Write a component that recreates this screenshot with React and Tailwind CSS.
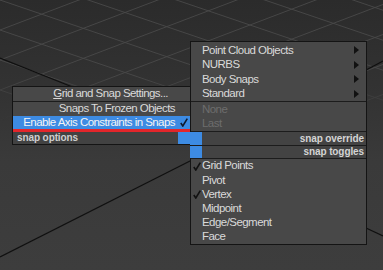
import React from 'react';

const gridA = [-150, -120, -90, -60, -30, 0, 30, 60, 90, 120];
const gridB = [0, 30, 60, 90, 120, 150, 180, 210, 240, 270];

function Check({ color = '#111' }) {
  return (
    <svg width="8" height="9" viewBox="0 0 8 9">
      <path d="M0.8 5 L2.8 8 L7.3 0.6" fill="none" stroke={color} strokeWidth="1.6" />
    </svg>
  );
}

function Arrow() {
  return (
    <svg width="5" height="8" viewBox="0 0 5 8">
      <path d="M0 0 L5 4 L0 8 Z" fill="#111" />
    </svg>
  );
}

function Viewport() {
  return (
    <svg className="absolute inset-0" width="383" height="270" viewBox="0 0 383 270">
      <defs>
        <linearGradient id="bg" x1="0" y1="0" x2="0" y2="1">
          <stop offset="0" stopColor="#2b2b2b" />
          <stop offset="0.35" stopColor="#333333" />
          <stop offset="0.6" stopColor="#3a3a3a" />
          <stop offset="1" stopColor="#3d3d3d" />
        </linearGradient>
        <linearGradient id="fade" x1="0" y1="0" x2="0" y2="1">
          <stop offset="0" stopColor="#fff" />
          <stop offset="0.28" stopColor="#fff" />
          <stop offset="0.45" stopColor="#000" />
        </linearGradient>
        <mask id="gridMask">
          <rect width="383" height="270" fill="url(#fade)" />
        </mask>
      </defs>
      <rect width="383" height="270" fill="url(#bg)" />
      <g mask="url(#gridMask)" stroke="#4a4a4a" strokeWidth="0.9">
        {gridA.map(c => (
          <line key={'a' + c} x1="0" y1={c} x2="383" y2={c + 383 * 0.34} />
        ))}
        {gridB.map(c => (
          <line key={'b' + c} x1="0" y1={c} x2="383" y2={c - 383 * 0.38} />
        ))}
      </g>
      <g stroke="#101010" strokeWidth="1.2">
        <line x1="0" y1="58" x2="80" y2="90" />
        <line x1="0" y1="257" x2="192" y2="160" />
        <line x1="366" y1="70" x2="383" y2="61" />
        <line x1="366" y1="228" x2="383" y2="236" />
      </g>
    </svg>
  );
}

function LeftMenu() {
  return (
    <div className="absolute left-[12px] top-[86px] w-[179px] border border-[#141414] bg-[#484848] text-[#dadada]">
      <div className="flex h-[14px] items-center justify-end pr-[22px]">
        <span><span className="underline underline-offset-1">G</span>rid and Snap Settings...</span>
      </div>
      <div className="h-px bg-[#1c1c1c]" />
      <div className="flex h-[14px] items-center justify-end pr-[15px]">Snaps To Frozen Objects</div>
      <div className="flex h-[13px] items-center justify-end bg-[#3d8be3] text-[#f4f4f4]">
        <span>Enable Axis Constraints in Snaps</span>
        <span className="flex w-[15px] justify-center pl-[2px]"><Check color="#0e1a30" /></span>
      </div>
      <div className="h-[3px] bg-[#e3262b]" />
      <div className="flex h-[12px] items-center justify-between bg-[#424242]">
        <span className="pl-[4px] text-[10px] font-bold tracking-[-0.1px] text-[#cfcfcf]">snap options</span>
        <span className="h-full w-[12px] bg-[#3d8be3]" />
      </div>
    </div>
  );
}

function Item({ label, arrow, disabled, checked, h = 'h-[14.5px]' }) {
  return (
    <div className={`flex ${h} items-center pr-[7px] ${disabled ? 'text-[#6d6d6d]' : 'text-[#dadada]'}`}>
      <span className="flex w-[11px] justify-end pr-[1px]">{checked && <Check />}</span>
      <span className="flex-1">{label}</span>
      {arrow && <Arrow />}
    </div>
  );
}

function Header({ label, h }) {
  return (
    <div className={`flex ${h} items-center bg-[#434343]`}>
      <span className="-ml-px h-full w-[12px] bg-[#3d8be3]" />
      <span className="flex-1 pr-[2px] text-right text-[10px] font-bold tracking-[-0.1px] text-[#d4d4d4]">{label}</span>
    </div>
  );
}

function RightMenu() {
  return (
    <div className="absolute left-[190px] top-[41px] w-[177px] border border-[#141414] bg-[#484848]">
      <div className="pt-[1px]">
        <Item label="Point Cloud Objects" arrow />
        <Item label="NURBS" arrow />
        <Item label="Body Snaps" arrow />
        <Item label="Standard" arrow />
      </div>
      <div className="h-px bg-[#1c1c1c]" />
      <div className="pt-[1px]">
        <Item label="None" disabled h="h-[14px]" />
        <Item label="Last" disabled h="h-[14px]" />
      </div>
      <div className="h-px bg-[#1c1c1c]" />
      <Header label="snap override" h="h-[13px]" />
      <div className="h-px bg-[#1c1c1c]" />
      <Header label="snap toggles" h="h-[12px]" />
      <div className="h-px bg-[#1c1c1c]" />
      <div>
        <Item label="Grid Points" checked h="h-[14.2px]" />
        <Item label="Pivot" h="h-[14.2px]" />
        <Item label="Vertex" checked h="h-[14.2px]" />
        <Item label="Midpoint" h="h-[14.2px]" />
        <Item label="Edge/Segment" h="h-[14.2px]" />
        <Item label="Face" h="h-[14.2px]" />
      </div>
    </div>
  );
}

export default function App() {
  return (
    <div className="relative h-[270px] w-[383px] overflow-hidden bg-[#3b3b3b] font-['Liberation_Sans',Arial,sans-serif] text-[11.5px] leading-none tracking-[-0.55px]">
      <Viewport />
      <LeftMenu />
      <RightMenu />
    </div>
  );
}
